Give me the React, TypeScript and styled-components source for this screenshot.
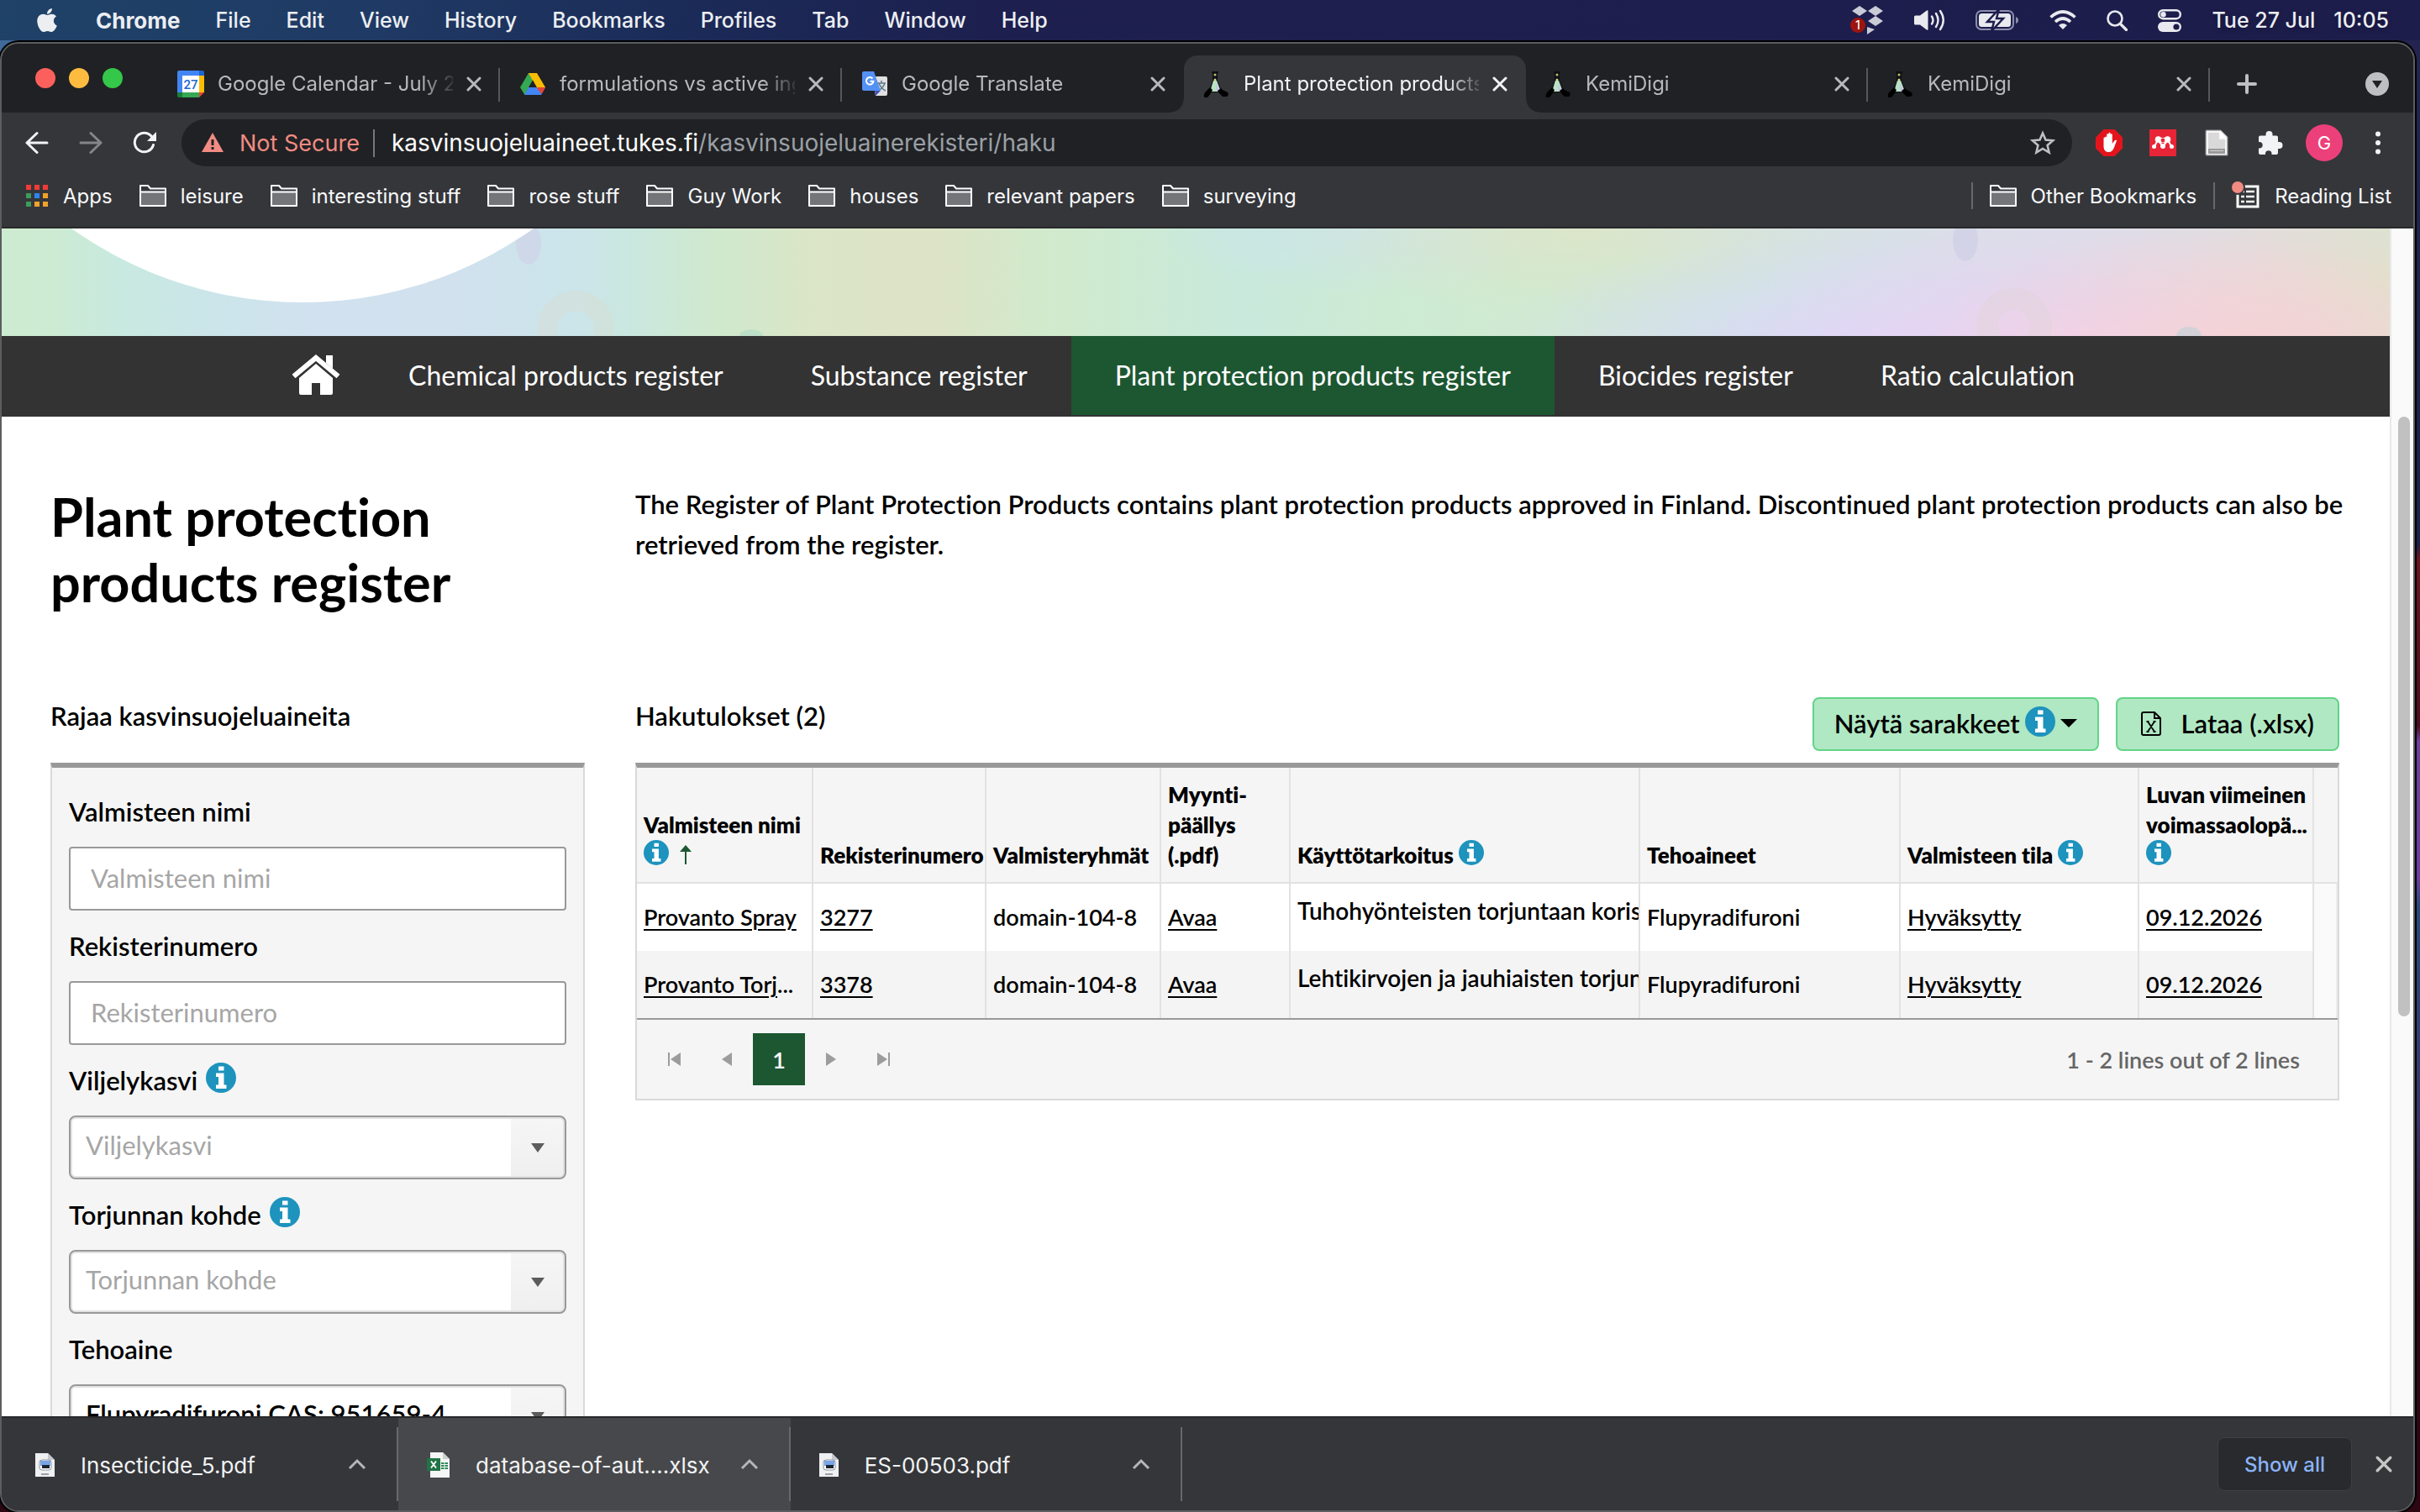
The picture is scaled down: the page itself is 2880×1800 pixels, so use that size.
import React from "react";
import styled, { createGlobalStyle, css } from "styled-components";
import { FaApple } from "react-icons/fa";

const ui = `Inter, "Liberation Sans", sans-serif`;
const site = `Lato, "Liberation Sans", sans-serif`;

const GlobalStyle = createGlobalStyle`
  *, *::before, *::after { box-sizing: border-box; }
  body { margin: 0; background: #1e1e4c; }
  button, input, select { font: inherit; color: inherit; margin: 0; }
  button { background: none; border: 0; padding: 0; cursor: pointer; }
  a { color: inherit; text-decoration: none; }
  svg { display: block; flex: none; }
  h1, h2, p, ul { margin: 0; padding: 0; }
`;

/* ---------- desktop and menu bar ---------- */

const Desktop = styled.div`
  display: flex;
  flex-direction: column;
  height: 100vh;
  overflow: hidden;
  font-family: ${ui};
  background:
    linear-gradient(to bottom, #3f6a9c 0%, #3f6a9c 8%, transparent 8%) left / 30px 100% no-repeat,
    linear-gradient(to bottom, #23244f 0%, #1c1f48 36%, #6a1420 37%, #4a0c1c 48%, #6d3f9c 49%, #6b3ea0 58%, #28487a 60%, #3a3468 74%, #2c0612 86%, #2c0612 100%) right / 30px 100% no-repeat,
    #2c0612;
`;

const MenuBar = styled.header`
  display: flex;
  align-items: center;
  justify-content: space-between;
  flex: none;
  height: 48px;
  margin-bottom: 2px;
  padding: 0 37px 0 40px;
  color: #eceef2;
  font-size: 25px;
  font-weight: 500;
  text-shadow: 0 2px 6px rgba(0, 0, 0, 0.35);
  background: linear-gradient(100deg, #1f4268 0%, #1f3a64 16%, #1b2a57 29%, #1d1f4e 42%, #1d1d4c 100%);
`;

const MenuItems = styled.nav`
  display: flex;
  align-items: center;
  gap: 42px;
`;

const MenuItem = styled.button<{ $strong?: boolean }>`
  font-size: ${(p) => (p.$strong ? 26 : 25)}px;
  font-weight: ${(p) => (p.$strong ? 700 : 500)};
`;

const StatusItems = styled.div`
  display: flex;
  align-items: center;
  gap: 36px;
`;

const Clock = styled.time`
  display: flex;
  gap: 22px;
`;

/* ---------- browser window ---------- */

const Window = styled.div`
  display: flex;
  flex-direction: column;
  flex: 1;
  min-height: 0;
  margin-right: 6px;
  overflow: hidden;
  border: 2px solid #5c5d60;
  border-radius: 22px;
  background: #35363a;
  box-shadow: 0 0 0 2px #000;
`;

const TabStrip = styled.div`
  display: flex;
  align-items: center;
  flex: none;
  height: 82px;
  padding: 0 29px 0 40px;
  background: #202124;
`;

const Lights = styled.div`
  display: flex;
  gap: 16px;
  width: 146px;
`;

const Light = styled.button<{ $color: string }>`
  width: 24px;
  height: 24px;
  border-radius: 50%;
  background: ${(p) => p.$color};
`;

const Tabs = styled.div`
  display: flex;
  align-self: flex-end;
  flex: 0 1 2442px;
  min-width: 0;
`;

const Tab = styled.div<{ $active?: boolean; $divider?: boolean }>`
  position: relative;
  display: flex;
  align-items: center;
  gap: 16px;
  flex: 1 1 0;
  min-width: 0;
  height: 68px;
  padding: 0 22px 0 23px;
  font-size: 24px;
  color: ${(p) => (p.$active ? "#f1f3f4" : "#b6b9bd")};
  ${(p) =>
    p.$divider &&
    css`
      &::after {
        content: "";
        position: absolute;
        right: 0;
        top: 15px;
        width: 2px;
        height: 40px;
        background: #55575b;
      }
    `}
  ${(p) =>
    p.$active &&
    css`
      background: #35363a;
      border-radius: 16px 16px 0 0;
      &::before,
      &::after {
        content: "";
        position: absolute;
        bottom: 0;
        width: 16px;
        height: 16px;
      }
      &::before {
        right: 100%;
        background: radial-gradient(circle at 0 0, transparent 15px, #35363a 16px);
      }
      &::after {
        left: 100%;
        background: radial-gradient(circle at 100% 0, transparent 15px, #35363a 16px);
      }
    `}
`;

const TabTitle = styled.span`
  flex: 1;
  min-width: 0;
  overflow: hidden;
  white-space: nowrap;
  line-height: 32px;
  mask-image: linear-gradient(to right, #000 86%, rgba(0, 0, 0, 0.15) 100%);
`;

const NewTab = styled.button`
  margin-left: 32px;
  margin-top: 14px;
`;

const TabSearch = styled.button`
  margin-left: auto;
  margin-top: 14px;
`;

const Toolbar = styled.div`
  display: flex;
  align-items: center;
  flex: none;
  height: 72px;
  padding: 0 26px 0 28px;
  color: #f1f3f4;
`;

const NavButtons = styled.div`
  display: flex;
  gap: 36px;
  margin-right: 30px;
`;

const Address = styled.div`
  display: flex;
  align-items: center;
  flex: 1;
  min-width: 0;
  height: 56px;
  padding: 0 20px 0 24px;
  border-radius: 28px;
  background: #202124;
  font-size: 28px;
`;

const Security = styled.button`
  display: flex;
  align-items: center;
  gap: 19px;
  padding-right: 16px;
  font-size: 27px;
  color: #f28b82;
  border-right: 2px solid #76777a;
`;

const Url = styled.span`
  flex: 1;
  padding-left: 20px;
  color: #fff;
  white-space: nowrap;
`;

const UrlPath = styled.span`
  color: #9aa0a6;
`;

const Extensions = styled.div`
  display: flex;
  align-items: center;
  gap: 32px;
  margin-left: 28px;
`;

const Avatar = styled.button`
  width: 44px;
  height: 44px;
  margin: 0 -6px;
  border-radius: 50%;
  background: #ec407a;
  color: #fff;
  font-size: 22px;
`;

const BookmarkBar = styled.nav`
  display: flex;
  align-items: center;
  flex: none;
  height: 66px;
  gap: 32px;
  padding: 0 26px 10px 28px;
  border-bottom: 2px solid #28282a;
  color: #f8f9fa;
  font-size: 24px;
`;

const Bookmark = styled.a`
  display: flex;
  align-items: center;
  gap: 17px;
  white-space: nowrap;
`;

const BookmarkEnd = styled.div`
  display: flex;
  align-items: center;
  gap: 20px;
  margin-left: auto;
`;

const BarDivider = styled.span`
  width: 2px;
  height: 32px;
  background: #66686b;
`;

const Viewport = styled.div`
  display: flex;
  flex: 1;
  min-height: 0;
  background: #fff;
`;

const Page = styled.div`
  flex: 1;
  min-width: 0;
  overflow: hidden;
  font-family: ${site};
  font-variant-ligatures: none;
  color: #000;
`;

const ScrollTrack = styled.div`
  flex: none;
  width: 28px;
  padding: 224px 4px 0 8px;
  border-left: 2px solid #e8e8e8;
  background: #fafafa;
`;

const ScrollThumb = styled.div`
  height: 60%;
  border-radius: 8px;
  background: #c1c1c1;
`;

/* ---------- site ---------- */

const Banner = styled.div`
  position: relative;
  height: 128px;
  overflow: hidden;
  background:
    radial-gradient(ellipse 380px 150px at 94% 108%, rgba(246, 210, 212, 0.9), transparent),
    radial-gradient(ellipse 440px 150px at 87% 108%, rgba(240, 208, 240, 0.9), transparent),
    radial-gradient(ellipse 480px 150px at 78% 115%, rgba(218, 216, 252, 0.95), transparent 95%),
    radial-gradient(ellipse 560px 90px at 86% 0%, rgba(222, 221, 234, 0.8), transparent),
    radial-gradient(ellipse 360px 100px at 66% 0%, rgba(221, 229, 200, 0.9), transparent),
    radial-gradient(ellipse 260px 80px at 57% 0%, rgba(203, 228, 236, 0.9), transparent),
    linear-gradient(to right, #cdebd0 0%, #cdebd2 2%, #c8e9e0 5%, #cbe5ea 9%, #d1e1ef 13%, #d1e1ee 19%, #cbe5ea 24%, #cae8dc 27%, #d0e9cd 30%, #dbe5c7 34%, #dee3c6 39%, #d3e9cb 43%, #cdebd2 47%, #c9e9dc 52%, #cdebd3 58%, #d0ead0 65%, #cfe6e0 75%, #d6dfe8 86%, #e3dfcf 95%, #dce4c8 100%);
`;

const BannerArt = styled.svg`
  position: absolute;
  inset: 0;
  width: 100%;
  height: 100%;
`;

const SiteNav = styled.nav`
  display: flex;
  align-items: flex-start;
  height: 96px;
  padding-left: 345px;
  background: #333;
  color: #fff;
  font-size: 32px;
`;

const HomeLink = styled.a`
  display: flex;
  align-items: center;
  height: 92px;
  padding-right: 29px;
`;

const SiteLink = styled.a<{ $active?: boolean }>`
  display: flex;
  align-items: center;
  height: 94px;
  padding: 0 52px 2px;
  white-space: nowrap;
  background: ${(p) => (p.$active ? "#1d5732" : "transparent")};
`;

const columns = css`
  display: grid;
  grid-template-columns: 636px minmax(0, 1fr);
  column-gap: 60px;
`;

const Intro = styled.div`
  ${columns}
  padding: 80px 24px 96px 58px;
`;

const Title = styled.h1`
  font-size: 63px;
  line-height: 78px;
  font-weight: 700;
  max-width: 560px;
`;

const Lead = styled.p`
  font-size: 31px;
  line-height: 48px;
  font-weight: 600;
`;

const Main = styled.main`
  ${columns}
  align-items: start;
  padding: 0 60px 60px 58px;
`;

const SectionHead = styled.div`
  display: flex;
  align-items: flex-start;
  justify-content: space-between;
  height: 80px;
`;

const SectionTitle = styled.h2`
  font-size: 31px;
  line-height: 48px;
  font-weight: 600;
`;

const Filters = styled.form`
  display: flex;
  flex-direction: column;
  gap: 18px;
  padding: 28px 20px 40px;
  border: 2px solid #d9d9d9;
  border-top: 6px solid #999;
  background: #f5f5f5;
  font-size: 31px;
`;

const Field = styled.div`
  display: flex;
  flex-direction: column;
  gap: 18px;
`;

const FieldHead = styled.div`
  display: flex;
  align-items: center;
  gap: 10px;
  height: 48px;
`;

const Label = styled.label`
  line-height: 48px;
  font-weight: 600;
`;

const InfoButton = styled.button`
  margin-bottom: 6px;
`;

const TextBox = styled.input`
  width: 100%;
  height: 76px;
  padding: 0 24px 2px;
  border: 2px solid #999;
  border-radius: 4px;
  background: #fff;
  outline: 0;
  &::placeholder {
    color: #a6a6a6;
    opacity: 1;
  }
`;

const Combo = styled.div`
  display: grid;
  height: 76px;
  overflow: hidden;
  border: 2px solid #999;
  border-radius: 8px;
  background: linear-gradient(#f6f6f6, #efefef) right / 64px 100% no-repeat, #fff;
  box-shadow: inset 0 0 0 2px #e2e2e2;
`;

const Select = styled.select<{ $empty?: boolean }>`
  grid-area: 1 / 1;
  appearance: none;
  height: 72px;
  padding: 0 80px 6px 18px;
  border: 0;
  outline: 0;
  background: transparent;
  font-weight: ${(p) => (p.$empty ? 400 : 600)};
  color: ${(p) => (p.$empty ? "#a6a6a6" : "#000")};
`;

const ComboArrow = styled.span`
  grid-area: 1 / 1;
  place-self: center end;
  margin-right: 24px;
  border: 8px solid transparent;
  border-top: 11px solid #5c5c5c;
  border-bottom: 0;
  pointer-events: none;
`;

const Actions = styled.div`
  display: flex;
  gap: 20px;
  padding-top: 2px;
`;

const GreenButton = styled.button<{ $gap: number; $pad: number }>`
  display: flex;
  align-items: center;
  gap: ${(p) => p.$gap}px;
  height: 64px;
  padding: 0 ${(p) => p.$pad}px 2px;
  border: 2px solid #62d488;
  border-radius: 8px;
  background: #b0e8c3;
  font-size: 31px;
  font-weight: 600;
`;

const ButtonInfo = styled.span`
  margin-bottom: 4px;
`;

const Grid = styled.div`
  border: 2px solid #d9d9d9;
  border-top: 6px solid #999;
  background: #f5f5f5;
`;

const Table = styled.table`
  width: 100%;
  table-layout: fixed;
  border-collapse: separate;
  border-spacing: 0;
  border-bottom: 2px solid #999;
`;

const HeadCell = styled.th`
  padding: 14px 2px 14px 8px;
  border-right: 2px solid #e2e2e2;
  border-bottom: 2px solid #e2e2e2;
  font-size: 26px;
  line-height: 36px;
  font-weight: 800;
  text-align: left;
  vertical-align: bottom;
  white-space: nowrap;
  &:last-child { border-right: 0; }
`;

const HeadIcons = styled.div`
  display: flex;
  align-items: center;
  gap: 12px;
  height: 36px;
`;

const HeadInline = styled.div`
  display: flex;
  align-items: center;
  gap: 6px;
`;

const HeadInfo = styled.button`
  margin-bottom: 6px;
`;

const Row = styled.tr`
  background: #fff;
  &:nth-child(even) { background: #f4f4f4; }
`;

const Cell = styled.td<{ $raised?: boolean }>`
  height: 80px;
  padding: ${(p) => (p.$raised ? "12px 0 28px 8px" : "20px 0 20px 8px")};
  border-right: 2px solid #e2e2e2;
  font-size: ${(p) => (p.$raised ? 28 : 27)}px;
  line-height: 40px;
  font-weight: 600;
  white-space: nowrap;
  overflow: hidden;
  &:last-child { padding: 0; background: #fafafa; border-color: #ececec; }
`;

const CellLink = styled.a`
  text-decoration: underline;
  text-decoration-thickness: 2px;
  text-underline-offset: 4px;
`;

const Pager = styled.div`
  display: flex;
  align-items: center;
  height: 94px;
  padding: 0 45px 0 14px;
  font-size: 27px;
  font-weight: 600;
`;

const PageButton = styled.button<{ $current?: boolean }>`
  display: flex;
  align-items: center;
  justify-content: center;
  width: 62px;
  height: 62px;
  color: ${(p) => (p.$current ? "#fff" : "#9c9c9c")};
  background: ${(p) => (p.$current ? "#1d5732" : "transparent")};
`;

const PageInfo = styled.span`
  margin-left: auto;
  color: #666;
`;

/* ---------- downloads ---------- */

const Downloads = styled.footer`
  display: flex;
  align-items: center;
  flex: none;
  height: 112px;
  padding: 0 25px 0 6px;
  border-top: 2px solid #28282a;
  background: #35363a;
`;

const Download = styled.div<{ $hover?: boolean }>`
  display: flex;
  align-items: center;
  justify-content: space-between;
  flex: 0 1 466px;
  height: 100%;
  padding-left: 34px;
  background: ${(p) => (p.$hover ? "#47484b" : "transparent")};
`;

const DownloadFile = styled.button`
  display: flex;
  align-items: center;
  gap: 30px;
  padding-top: 2px;
  font-size: 26px;
  color: #f1f3f4;
  white-space: nowrap;
`;

const DownloadMenu = styled.button`
  display: flex;
  align-items: center;
  height: 88px;
  padding: 0 36px;
  border-right: 2px solid #66686b;
`;

const ShowAll = styled.button`
  width: 160px;
  height: 64px;
  margin-left: auto;
  margin-right: 28px;
  border: 1px solid #3f4043;
  border-radius: 8px;
  background: #292a2d;
  color: #8ab4f8;
  font-size: 24px;
  font-weight: 500;
`;

/* ---------- icons ---------- */

const Cross = ({ size = 18, color = "#b6b9bd" }: { size?: number; color?: string }) => (
  <svg width={size} height={size} viewBox="0 0 18 18" stroke={color} strokeWidth="3" strokeLinecap="round">
    <path d="M2 2l14 14M16 2L2 16" />
  </svg>
);

const Info = ({ size }: { size: number }) => (
  <svg width={size} height={size} viewBox="0 0 36 36">
    <circle cx="18" cy="18" r="18" fill="#1d93bd" />
    <path d="M15 4.5h6.5v5H15zM12 12.5h9.5v14h3v4.5H12v-4.5h3V17h-3z" fill="#fff" />
  </svg>
);

const Folder = () => (
  <svg width="32" height="26" viewBox="0 0 32 26">
    <path d="M1 8v15q0 2 2 2h26q2 0 2-2V8z" fill="#747578" />
    <path d="M1 24V1h9l3 3.500h18V25H1zM1 8.500h30" fill="none" stroke="#fff" strokeWidth="2" strokeLinejoin="round" />
  </svg>
);

const Flask = () => (
  <svg width="32" height="32" viewBox="0 0 32 32">
    <path d="M10 1h8v2h-1v9l6 14H6l5-14V3h-1z" fill="#101014" />
    <path d="M12 12h4l5 13H8z" fill="#b9e3c4" />
    <path d="M15 15l4 9h-4z" fill="#c9c2ec" />
    <circle cx="14" cy="5" r="1.500" fill="#b9bf72" />
    <circle cx="14" cy="11" r="1.500" fill="#d3d98a" />
    <path d="M8 20l3 3-2 4-4 5H1q-1-3 1-6zM17 24l4-3 2 2 6 3q2 3-1 5h-5l-4-4z" fill="#000" />
  </svg>
);

const CalendarIcon = () => (
  <svg width="32" height="32" viewBox="0 0 32 32">
    <path d="M2 0h24v6H6v20H0V2q0-2 2-2z" fill="#4285f4" />
    <path d="M26 0h4q2 0 2 2v4h-6z" fill="#1967d2" />
    <path d="M26 6h6v20h-6z" fill="#fbbc04" />
    <path d="M6 26h20v6H6z" fill="#34a853" />
    <path d="M0 26h6v6H2q-2 0-2-2z" fill="#188038" />
    <path d="M26 26h6l-6 6z" fill="#ea4335" />
    <path d="M6 6h20v20H6z" fill="#fff" />
    <text x="16" y="21.500" textAnchor="middle" fontFamily="Roboto, sans-serif" fontWeight="500" fontSize="15" fill="#1967d2">27</text>
  </svg>
);

const DriveIcon = () => (
  <svg width="32" height="32" viewBox="0 0 32 32">
    <path d="M11 3h10l-5 9-9.500 17L1 20z" fill="#34a853" />
    <path d="M11 3h10l10 17H20.500z" fill="#fbbc04" />
    <path d="M11 20h20l-5 9H6z" fill="#4285f4" />
    <path d="M20.500 20H31l-4.500 8z" fill="#ea4335" />
    <path d="M11 20l5-8.500 4.800 8.500z" fill="#202124" />
  </svg>
);

const TranslateIcon = () => (
  <svg width="32" height="32" viewBox="0 0 32 32">
    <path d="M13 7h16q2 0 2 2v19q0 2-2 2H17z" fill="#e0e0e0" />
    <path d="M19 15h10M24 12v3M21 15q2 6 8 9M28 15q-2 6-8 9" fill="none" stroke="#607d8b" strokeWidth="1.600" />
    <path d="M16 24h7l-6 6z" fill="#3f51b5" />
    <path d="M3 1h12l8 23H3q-2 0-2-2V3q0-2 2-2z" fill="#5491f5" />
    <path d="M13.500 9.500a4.300 4.300 0 1 0 1 3.200H10.500" fill="none" stroke="#fff" strokeWidth="2" />
  </svg>
);

const BackIcon = ({ forward }: { forward?: boolean }) => (
  <svg width="28" height="28" viewBox="0 0 28 28" fill="none" stroke={forward ? "#85868a" : "#f1f3f4"} strokeWidth="3" strokeLinecap="round" strokeLinejoin="round">
    {forward ? <path d="M2 14h24M14 2.500L26 14 14 25.500" /> : <path d="M26 14H2M14 2.500L2 14l12 11.500" />}
  </svg>
);

const ReloadIcon = () => (
  <svg width="28" height="28" viewBox="0 0 28 28">
    <path d="M24.500 16.500A11.300 11.300 0 1 1 22.500 6.500" fill="none" stroke="#f1f3f4" strokeWidth="3" strokeLinecap="round" />
    <path d="M28 1v11H17z" fill="#f1f3f4" />
  </svg>
);

const WarningIcon = () => (
  <svg width="26" height="24" viewBox="0 0 26 24">
    <path d="M13 0l13 23H0z" fill="#f28b82" />
    <path d="M11.500 8h3v7h-3zM11.500 17h3v3h-3z" fill="#202124" />
  </svg>
);

const StarIcon = () => (
  <svg width="30" height="30" viewBox="0 0 30 30">
    <path d="M15 3.500l3.500 8 8.700.8-6.600 5.700 2 8.500L15 22l-7.600 4.500 2-8.500-6.600-5.700 8.700-.8z" fill="none" stroke="#bfc0c2" strokeWidth="2.600" />
  </svg>
);

const AdBlockIcon = () => (
  <svg width="32" height="32" viewBox="0 0 32 32">
    <path d="M9.500 0h13L32 9.500v13L22.500 32h-13L0 22.500v-13z" fill="#e4141d" />
    <path d="M11 10q0-1.500 1.100-1.500T13.200 10V6.500q0-1.300 1.100-1.300t1.100 1.300V5q0-1.200 1.100-1.200T17.600 5v1.500q0-1.200 1.100-1.200t1.100 1.200V17l2.600-3.500q1.200-1.200 2.800-.4L22 21.500q-2 5.500-6.500 5.500-5.500 0-6-6V11q0-1.400 1-1.400z" fill="#fff" />
  </svg>
);

const MendeleyIcon = () => (
  <svg width="32" height="32" viewBox="0 0 32 32">
    <rect width="32" height="32" fill="#e72536" />
    <path d="M6 20l4-7 6 7 6-7 4 7" fill="none" stroke="#fff" strokeWidth="2" />
    <g fill="#fff">
      <circle cx="10.500" cy="12" r="3.800" />
      <circle cx="21.500" cy="12" r="3.800" />
      <path d="M10 8.500q6 3 12 0v6q-6 3-12 0z" />
      <circle cx="5.500" cy="20.500" r="2.500" />
      <circle cx="16" cy="20" r="3" />
      <circle cx="26.500" cy="20.500" r="2.500" />
    </g>
    <circle cx="16" cy="13" r="2.400" fill="#e72536" />
  </svg>
);

const PageIcon = () => (
  <svg width="32" height="32" viewBox="0 0 32 32">
    <path d="M4 1h17l8 8v22H4q-1 0-1-1V2q0-1 1-1z" fill="#dcdcdc" stroke="#8d8d8d" />
    <path d="M5 3h15v8h7v18H5z" fill="#d9d9d9" stroke="#fff" strokeWidth="1.500" />
    <path d="M20 2l8 8h-8z" fill="#fff" />
    <path d="M6 23h20v6H6z" fill="#9a9a9a" />
    <path d="M8 25.500h16" stroke="#d0d0d0" />
  </svg>
);

const PuzzleIcon = () => (
  <svg width="32" height="32" viewBox="0 0 32 32">
    <path d="M4 7.500h6.500V6a4 4 0 0 1 8 0v1.500H23q2 0 2 2V15h1.500a4 4 0 0 1 0 8H25v5q0 2-2 2h-5.500v-1.500a3.800 3.800 0 0 0-7.500 0V30H4q-2 0-2-2v-5.500h1.500a3.800 3.800 0 0 0 0-7.500H2V9.500q0-2 2-2z" fill="#f1f3f4" />
  </svg>
);

const DotsIcon = () => (
  <svg width="32" height="32" viewBox="0 0 32 32" fill="#f1f3f4">
    <circle cx="16" cy="5.500" r="3" />
    <circle cx="16" cy="16" r="3" />
    <circle cx="16" cy="26.500" r="3" />
  </svg>
);

const AppsIcon = () => (
  <svg width="28" height="28" viewBox="0 0 28 28">
    {["#f23b36", "#f23b36", "#f23b36", "#3d9c5a", "#2b87f0", "#f0a32a", "#3d9c5a", "#f0a32a", "#f0a32a"].map((c, i) => (
      <rect key={i} x={1 + (i % 3) * 10} y={1 + Math.floor(i / 3) * 10} width="6" height="6" fill={c} />
    ))}
  </svg>
);

const ReadingIcon = () => (
  <svg width="34" height="34" viewBox="0 0 34 34">
    <path d="M7 6h24v24H7z" fill="none" stroke="#fff" strokeWidth="3" />
    <path d="M11 12h4M11 18h4M11 24h4M17 12h10M17 18h10M17 24h10" stroke="#fff" strokeWidth="2.500" />
    <circle cx="7" cy="7" r="9" fill="#35363a" />
    <circle cx="7" cy="7" r="7" fill="#f28b82" />
  </svg>
);

const DropboxIcon = () => (
  <svg width="40" height="36" viewBox="0 0 40 36">
    <path d="M11 1l9 6-9 6-9-6zM30 1l9 6-9 6-9-6zM30 13l9 6-9 6-9-6zM20 26l9 3-9 6z" fill="#c9cbd6" />
    <circle cx="9" cy="24" r="9" fill="#a3150f" />
    <text x="9" y="29" textAnchor="middle" fontFamily="Inter, sans-serif" fontSize="14" fill="#fff">1</text>
  </svg>
);

const VolumeIcon = () => (
  <svg width="37" height="26" viewBox="0 0 37 26">
    <path d="M0 9q0-1.500 1.500-1.500H7L15 1.500q1.500-1 1.500.8v21.400q0 1.800-1.500.8L7 18.500H1.500Q0 18.500 0 17z" fill="#e9eaef" />
    <path d="M21 8.500q3 4.500 0 9M26 5q5 8 0 16M31 2q7.500 11 0 22" fill="none" stroke="#e9eaef" strokeWidth="2.400" strokeLinecap="round" />
  </svg>
);

const BatteryIcon = () => (
  <svg width="52" height="26" viewBox="0 0 52 26">
    <rect x="1" y="2" width="44" height="22" rx="6" fill="none" stroke="#8c8eab" strokeWidth="2" />
    <path d="M48 9q3 1 3 4t-3 4z" fill="#8c8eab" />
    <rect x="4" y="5" width="38" height="16" rx="3.500" fill="#e9eaef" />
    <path d="M28 0L14 15h8l-3 11 14-15h-8z" fill="#e9eaef" stroke="#1d1d4c" strokeWidth="2.500" />
  </svg>
);

const WifiIcon = () => (
  <svg width="32" height="24" viewBox="0 0 32 24" fill="none" stroke="#e9eaef" strokeWidth="3.600">
    <path d="M1.500 8.500q14.500-13 29 0M7 14q9-8 18 0" />
    <path d="M16 23l-5-5q5-4 10 0z" fill="#e9eaef" stroke="none" />
  </svg>
);

const SearchIcon = () => (
  <svg width="25" height="25" viewBox="0 0 25 25" fill="none" stroke="#e9eaef" strokeWidth="2.600" strokeLinecap="round">
    <circle cx="10" cy="10" r="8.500" />
    <path d="M16.500 16.500l7 7" strokeWidth="3.200" />
  </svg>
);

const ControlIcon = () => (
  <svg width="28" height="27" viewBox="0 0 28 27">
    <rect x="1.200" y="1.200" width="25.600" height="10" rx="5" fill="none" stroke="#e9eaef" strokeWidth="2.400" />
    <circle cx="6.500" cy="6.200" r="3.200" fill="#e9eaef" />
    <rect y="15" width="28" height="12" rx="6" fill="#e9eaef" />
    <circle cx="22" cy="21" r="3.600" fill="#1d1d4c" />
  </svg>
);

const HomeIcon = () => (
  <svg width="58" height="48" viewBox="0 0 58 48" fill="#fff">
    <path d="M41 1h8v16l-8-7z" />
    <path d="M2.500 26L29 4l26.500 22" fill="none" stroke="#fff" strokeWidth="6" />
    <path d="M29 11l20 17v18q0 2-2 2H34V34H24v14H11q-2 0-2-2V28z" />
  </svg>
);

const ExcelOutline = () => (
  <svg width="24" height="29" viewBox="0 0 24 29" fill="none" stroke="#000" strokeWidth="2">
    <path d="M16 1H3Q1 1 1 3v23q0 2 2 2h18q2 0 2-2V8zM16 1v7h7" />
    <path d="M8 12l8 12M16 12L8 24M6.500 12h3M14.500 12h3M6.500 24h3M14.500 24h3" strokeWidth="1.800" />
  </svg>
);

const PdfIcon = () => (
  <svg width="24" height="30" viewBox="0 0 24 30">
    <path d="M0 1h15l8 8v20H0z" fill="#eef0f2" />
    <path d="M15 1l8 8h-8z" fill="#c4c7cb" />
    <rect x="5" y="9" width="14" height="12" rx="3" fill="#fff" stroke="#8d939b" />
    <path d="M6 10h12v6H6z" fill="#79a5e8" />
    <path d="M8 15h9v4H8z" fill="#1d2430" />
    <path d="M7 26h9" stroke="#9a9fa5" strokeWidth="2" />
  </svg>
);

const XlsxIcon = () => (
  <svg width="28" height="30" viewBox="0 0 28 30">
    <path d="M4 0h15l8 8v22H4z" fill="#f4f6f5" />
    <path d="M19 0l8 8h-8z" fill="#ccd0ce" />
    <path d="M17 12h8v8h-8z" fill="#2f8a58" />
    <path d="M17 14.500h8M17 17.500h8M21 12v8" stroke="#f4f6f5" />
    <rect y="7" width="16" height="15" fill="#217346" />
    <path d="M5 10.500l6 8M11 10.500l-6 8" stroke="#fff" strokeWidth="1.800" />
  </svg>
);

const ChevronUp = () => (
  <svg width="22" height="14" viewBox="0 0 22 14" fill="none" stroke="#b4b6b9" strokeWidth="3">
    <path d="M2 12l9-9 9 9" />
  </svg>
);

const PagerArrow = ({ kind }: { kind: "first" | "prev" | "next" | "last" }) => {
  const flip = kind === "next" || kind === "last";
  const bar = kind === "first" || kind === "last";
  return (
    <svg width="16" height="16" viewBox="0 0 16 16" fill="currentColor">
      <g transform={flip ? "matrix(-1 0 0 1 16 0)" : undefined}>
        <path d={bar ? "M0 0h2v16H0zM15 0v16L3 8z" : "M14 0v16L2 8z"} />
      </g>
    </svg>
  );
};

/* ---------- data ---------- */

const menu = ["File", "Edit", "View", "History", "Bookmarks", "Profiles", "Tab", "Window", "Help"];
const tabs = [
  { title: "Google Calendar - July 2", icon: <CalendarIcon />, divider: true },
  { title: "formulations vs active ing", icon: <DriveIcon />, divider: true },
  { title: "Google Translate", icon: <TranslateIcon /> },
  { title: "Plant protection products", icon: <Flask />, active: true },
  { title: "KemiDigi", icon: <Flask />, divider: true },
  { title: "KemiDigi", icon: <Flask />, divider: true },
];
const folders = ["leisure", "interesting stuff", "rose stuff", "Guy Work", "houses", "relevant papers", "surveying"];
const links = ["Chemical products register", "Substance register", "Plant protection products register", "Biocides register", "Ratio calculation"];
const fields = [
  { id: "name", label: "Valmisteen nimi" },
  { id: "number", label: "Rekisterinumero" },
  { id: "crop", label: "Viljelykasvi", select: true, info: true },
  { id: "target", label: "Torjunnan kohde", select: true, info: true },
  { id: "substance", label: "Tehoaine", select: true, value: "Flupyradifuroni CAS: 951659-4" },
];
const widths = [210, 206, 208, 154, undefined, 310, 284, 208, 28];
const rows = [
  { name: "Provanto Spray", cut: "", number: "3277", use: "Tuhohyönteisten torjuntaan koris" },
  { name: "Provanto Torj", cut: "...", number: "3378", use: "Lehtikirvojen ja jauhiaisten torjun" },
];
const downloads = [
  { name: "Insecticide_5.pdf", icon: <PdfIcon /> },
  { name: "database-of-aut....xlsx", icon: <XlsxIcon />, hover: true },
  { name: "ES-00503.pdf", icon: <PdfIcon /> },
];

/* ---------- parts ---------- */

const HeadWithInfo = ({ children }: { children: React.ReactNode }) => (
  <HeadInline>
    {children}
    <HeadInfo type="button" aria-label="Info"><Info size={30} /></HeadInfo>
  </HeadInline>
);

const Browser = () => (
  <>
    <TabStrip>
      <Lights>
        {["#fc605c", "#fdbc40", "#34c749"].map((c) => <Light key={c} $color={c} aria-label="Window control" />)}
      </Lights>
      <Tabs>
        {tabs.map((t, i) => (
          <Tab key={i} $active={t.active} $divider={t.divider}>
            {t.icon}
            <TabTitle>{t.title}</TabTitle>
            <button aria-label="Close tab"><Cross color={t.active ? "#f1f3f4" : "#b6b9bd"} /></button>
          </Tab>
        ))}
      </Tabs>
      <NewTab aria-label="New tab">
        <svg width="24" height="24" viewBox="0 0 24 24" stroke="#bdbfc3" strokeWidth="4" strokeLinecap="round"><path d="M12 2v20M2 12h20" /></svg>
      </NewTab>
      <TabSearch aria-label="Search tabs">
        <svg width="28" height="28" viewBox="0 0 28 28"><circle cx="14" cy="14" r="14" fill="#bdbfc3" /><path d="M8 10h12l-6 9z" fill="#202124" /></svg>
      </TabSearch>
    </TabStrip>
    <Toolbar>
      <NavButtons>
        <button aria-label="Back"><BackIcon /></button>
        <button aria-label="Forward"><BackIcon forward /></button>
        <button aria-label="Reload"><ReloadIcon /></button>
      </NavButtons>
      <Address>
        <Security><WarningIcon />Not Secure</Security>
        <Url>kasvinsuojeluaineet.tukes.fi<UrlPath>/kasvinsuojeluainerekisteri/haku</UrlPath></Url>
        <button aria-label="Bookmark this page"><StarIcon /></button>
      </Address>
      <Extensions>
        <button aria-label="Ad blocker"><AdBlockIcon /></button>
        <button aria-label="Mendeley"><MendeleyIcon /></button>
        <button aria-label="Document"><PageIcon /></button>
        <button aria-label="Extensions"><PuzzleIcon /></button>
        <Avatar>G</Avatar>
        <button aria-label="Menu"><DotsIcon /></button>
      </Extensions>
    </Toolbar>
    <BookmarkBar>
      <Bookmark href="#"><AppsIcon />Apps</Bookmark>
      {folders.map((f) => <Bookmark key={f} href="#"><Folder />{f}</Bookmark>)}
      <BookmarkEnd>
        <BarDivider />
        <Bookmark href="#"><Folder />Other Bookmarks</Bookmark>
        <BarDivider />
        <Bookmark href="#"><ReadingIcon />Reading List</Bookmark>
      </BookmarkEnd>
    </BookmarkBar>
  </>
);

const FilterPanel = () => (
  <section>
    <SectionHead><SectionTitle>Rajaa kasvinsuojeluaineita</SectionTitle></SectionHead>
    <Filters>
      {fields.map((f) => (
        <Field key={f.id}>
          <FieldHead>
            <Label htmlFor={f.id}>{f.label}</Label>
            {f.info && <InfoButton type="button" aria-label="Info"><Info size={36} /></InfoButton>}
          </FieldHead>
          {f.select ? (
            <Combo>
              <Select id={f.id} $empty={!f.value}><option>{f.value ?? f.label}</option></Select>
              <ComboArrow />
            </Combo>
          ) : (
            <TextBox id={f.id} placeholder={f.label} />
          )}
        </Field>
      ))}
    </Filters>
  </section>
);

const Results = () => (
  <section>
    <SectionHead>
      <SectionTitle>Hakutulokset (2)</SectionTitle>
      <Actions>
        <GreenButton $gap={6} $pad={24}>
          Näytä sarakkeet
          <ButtonInfo><Info size={36} /></ButtonInfo>
          <svg width="20" height="10" viewBox="0 0 20 10"><path d="M0 0h20L10 10z" /></svg>
        </GreenButton>
        <GreenButton $gap={24} $pad={28}><ExcelOutline />Lataa (.xlsx)</GreenButton>
      </Actions>
    </SectionHead>
    <Grid>
      <Table>
        <colgroup>{widths.map((w, i) => <col key={i} width={w} />)}</colgroup>
        <thead>
          <tr>
            <HeadCell>
              Valmisteen nimi
              <HeadIcons>
                <HeadInfo type="button" aria-label="Info"><Info size={30} /></HeadInfo>
                <svg width="16" height="24" viewBox="0 0 16 24"><path d="M8 0l7 8H9v15H7V8H1z" fill="#1d5732" /></svg>
              </HeadIcons>
            </HeadCell>
            <HeadCell>Rekisterinumero</HeadCell>
            <HeadCell>Valmisteryhmät</HeadCell>
            <HeadCell>Myynti-<br />päällys<br />(.pdf)</HeadCell>
            <HeadCell><HeadWithInfo>Käyttötarkoitus</HeadWithInfo></HeadCell>
            <HeadCell>Tehoaineet</HeadCell>
            <HeadCell><HeadWithInfo>Valmisteen tila</HeadWithInfo></HeadCell>
            <HeadCell>
              Luvan viimeinen<br />voimassaolopä...
              <HeadIcons><HeadInfo type="button" aria-label="Info"><Info size={30} /></HeadInfo></HeadIcons>
            </HeadCell>
            <HeadCell />
          </tr>
        </thead>
        <tbody>
          {rows.map((r) => (
            <Row key={r.number}>
              <Cell><CellLink href="#">{r.name}</CellLink>{r.cut}</Cell>
              <Cell><CellLink href="#">{r.number}</CellLink></Cell>
              <Cell>domain-104-8</Cell>
              <Cell><CellLink href="#">Avaa</CellLink></Cell>
              <Cell $raised>{r.use}</Cell>
              <Cell>Flupyradifuroni</Cell>
              <Cell><CellLink href="#">Hyväksytty</CellLink></Cell>
              <Cell><CellLink href="#">09.12.2026</CellLink></Cell>
              <Cell />
            </Row>
          ))}
        </tbody>
      </Table>
      <Pager>
        <PageButton aria-label="First page"><PagerArrow kind="first" /></PageButton>
        <PageButton aria-label="Previous page"><PagerArrow kind="prev" /></PageButton>
        <PageButton $current>1</PageButton>
        <PageButton aria-label="Next page"><PagerArrow kind="next" /></PageButton>
        <PageButton aria-label="Last page"><PagerArrow kind="last" /></PageButton>
        <PageInfo>1 - 2 lines out of 2 lines</PageInfo>
      </Pager>
    </Grid>
  </section>
);

export default function App() {
  return (
    <Desktop>
      <GlobalStyle />
      <MenuBar>
        <MenuItems>
          <FaApple size={32} />
          <MenuItem $strong>Chrome</MenuItem>
          {menu.map((m) => <MenuItem key={m}>{m}</MenuItem>)}
        </MenuItems>
        <StatusItems>
          <DropboxIcon />
          <VolumeIcon />
          <BatteryIcon />
          <WifiIcon />
          <SearchIcon />
          <ControlIcon />
          <Clock><span>Tue 27 Jul</span><span>10:05</span></Clock>
        </StatusItems>
      </MenuBar>
      <Window>
        <Browser />
        <Viewport>
          <Page>
            <Banner>
              <BannerArt>
                <ellipse cx="627" cy="18" rx="15" ry="25" fill="#cfd3e8" opacity="0.7" />
                <circle cx="683" cy="120" r="34" fill="none" stroke="#d9dbd0" strokeWidth="24" opacity="0.4" />
                <ellipse cx="892" cy="128" rx="14" ry="8" fill="#bfe0c8" />
                <ellipse cx="2337" cy="14" rx="15" ry="25" fill="#cfcfe6" opacity="0.7" />
                <circle cx="2395" cy="116" r="32" fill="none" stroke="#e2d3dc" strokeWidth="26" opacity="0.5" />
                <ellipse cx="2603" cy="128" rx="15" ry="11" fill="#d3d2d8" />
                <circle cx="358" cy="-386" r="474" fill="#fff" />
              </BannerArt>
            </Banner>
            <SiteNav>
              <HomeLink href="#" aria-label="Home"><HomeIcon /></HomeLink>
              {links.map((l, i) => <SiteLink key={l} href="#" $active={i === 2}>{l}</SiteLink>)}
            </SiteNav>
            <Intro>
              <Title>Plant protection products register</Title>
              <Lead>
                The Register of Plant Protection Products contains plant protection products approved in Finland. Discontinued plant
                protection products can also be retrieved from the register.
              </Lead>
            </Intro>
            <Main>
              <FilterPanel />
              <Results />
            </Main>
          </Page>
          <ScrollTrack><ScrollThumb /></ScrollTrack>
        </Viewport>
        <Downloads>
          {downloads.map((d) => (
            <Download key={d.name} $hover={d.hover}>
              <DownloadFile>{d.icon}{d.name}</DownloadFile>
              <DownloadMenu aria-label="Download options"><ChevronUp /></DownloadMenu>
            </Download>
          ))}
          <ShowAll>Show all</ShowAll>
          <button aria-label="Close downloads"><Cross size={20} color="#c6c6c6" /></button>
        </Downloads>
      </Window>
    </Desktop>
  );
}
